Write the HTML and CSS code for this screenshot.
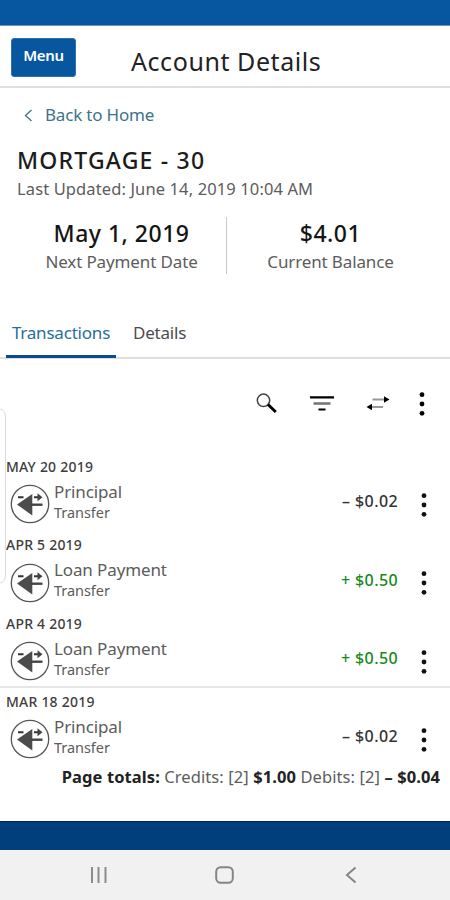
FILE: index.html
```html
<!DOCTYPE html>
<html lang="en">
<head>
<meta charset="utf-8">
<title>Account Details</title>
<link rel="stylesheet" href="styles.css">
</head>
<body>
<svg width="0" height="0" class="defs">
  <symbol id="transfer" viewBox="0 0 40 40">
    <circle cx="20" cy="20" r="18.700" fill="#fff" stroke="#555" stroke-width="1.300"/>
    <path d="M8 13.300h5.500M24 13.300h5" stroke="#333" stroke-width="2"/>
    <path d="M27.500 9.300l5 4-5 4z" fill="#444"/>
    <path d="M7 20.500L22.300 10v21.500z" fill="#4c4c4c"/>
    <path d="M20 20.700h12.500" stroke="#444" stroke-width="2.400"/>
  </symbol>
  <symbol id="dots" viewBox="0 0 6 24">
    <circle cx="3" cy="2.700" r="2.400"/><circle cx="3" cy="12" r="2.400"/><circle cx="3" cy="21.300" r="2.400"/>
  </symbol>
</svg>
<div class="status"></div>
<header class="header">
  <button class="menu">Menu</button>
  <h1 class="title">Account Details</h1>
</header>
<main class="main">
  <a class="back"><svg width="9" height="13" viewBox="0 0 9 13"><path d="M7.500 1L1.500 6.500l6 5.500" fill="none" stroke="#40728c" stroke-width="1.300"/></svg><span>Back to Home</span></a>
  <h2 class="account">MORTGAGE - 30</h2>
  <p class="updated">Last Updated: June 14, 2019 10:04 AM</p>
  <section class="summary">
    <div class="fact"><strong>May 1, 2019</strong><span>Next Payment Date</span></div>
    <div class="fact balance"><strong>$4.01</strong><span>Current Balance</span></div>
  </section>
  <nav class="tabs"><a class="tab active">Transactions</a><a class="tab">Details</a></nav>
  <div class="tools">
    <svg width="22" height="22" viewBox="0 0 22 22"><circle cx="7.500" cy="7.300" r="6.200" fill="none" stroke="#444" stroke-width="1.500"/><path d="M12 11.500l7.800 7.500" stroke="#000" stroke-width="3"/></svg>
    <svg width="26" height="22" viewBox="0 0 26 22"><path d="M1 4.300h24M9.500 16.500h7" stroke="#000" stroke-width="2.200"/><path d="M4.500 10.500h17" stroke="#777" stroke-width="2.600"/></svg>
    <svg width="24" height="22" viewBox="0 0 24 22"><path d="M6.500 6.500H19M5 14h12" stroke="#999" stroke-width="1.800"/><path d="M18 3.300l5.500 3.200-5.500 3.200zM6 10.800l-5.500 3.200 5.500 3.200z"/></svg>
    <svg width="6" height="24"><use href="#dots"/></svg>
  </div>
  <section class="group">
    <h3 class="day">MAY 20 2019</h3>
    <div class="row"><svg class="icon"><use href="#transfer"/></svg><div class="desc"><span class="name">Principal</span><span class="kind">Transfer</span></div><span class="amount">– $0.02</span><svg class="more"><use href="#dots"/></svg></div>
  </section>
  <section class="group">
    <h3 class="day">APR 5 2019</h3>
    <div class="row"><svg class="icon"><use href="#transfer"/></svg><div class="desc"><span class="name">Loan Payment</span><span class="kind">Transfer</span></div><span class="amount credit">+ $0.50</span><svg class="more"><use href="#dots"/></svg></div>
  </section>
  <section class="group">
    <h3 class="day">APR 4 2019</h3>
    <div class="row"><svg class="icon"><use href="#transfer"/></svg><div class="desc"><span class="name">Loan Payment</span><span class="kind">Transfer</span></div><span class="amount credit">+ $0.50</span><svg class="more"><use href="#dots"/></svg></div>
  </section>
  <section class="group ruled">
    <h3 class="day">MAR 18 2019</h3>
    <div class="row"><svg class="icon"><use href="#transfer"/></svg><div class="desc"><span class="name">Principal</span><span class="kind">Transfer</span></div><span class="amount">– $0.02</span><svg class="more"><use href="#dots"/></svg></div>
  </section>
  <p class="totals"><b>Page totals:</b> Credits: [2] <b>$1.00</b> Debits: [2] <b>– $0.04</b></p>
  <div class="edge"></div>
</main>
<div class="footer"></div>
<nav class="system">
  <svg width="18" height="18" viewBox="0 0 18 18"><path d="M2 1v16M8.500 1v16M15.500 1v16" stroke="#8c8c8c" stroke-width="2"/></svg>
  <svg width="19" height="18" viewBox="0 0 19 18"><rect x="1.200" y="1.200" width="16.600" height="15.600" rx="4.500" fill="none" stroke="#858585" stroke-width="2"/></svg>
  <svg width="12" height="18" viewBox="0 0 12 18"><path d="M10.500 1.500L2 9l8.500 7.500" fill="none" stroke="#858585" stroke-width="2"/></svg>
</nav>
</body>
</html>
```
FILE: styles.css
```css
* { box-sizing: border-box; }
body { margin: 0; width: 450px; height: 900px; overflow: hidden; background: #fff; font-family: "Noto Sans", sans-serif; color: #5c5c5c; }
h1, h2, h3, p { margin: 0; font-weight: 400; white-space: nowrap; }
svg { display: block; flex: none; }
.defs { display: none; }
.status { height: 26px; background: #0757a0; border-bottom: 1px solid #6997c2; }
.header { height: 62px; display: flex; align-items: flex-start; border-bottom: 2px solid #dedede; padding: 12px 0 0 11px; }
.menu { width: 65px; height: 39px; border: 1px solid #2f70ad; border-radius: 3px; background: #0757a0; color: #fff; font: 600 15px/20px "Noto Sans", sans-serif; letter-spacing: -.3px; padding: 0 0 5px; }
.title { margin-left: 55px; font-size: 25px; line-height: 34px; margin-top: 6px; color: #222; letter-spacing: .57px; }
.main { height: 733px; position: relative; padding-top: .1px; }
.back { display: flex; align-items: center; height: 24px; margin-top: 15px; padding-left: 24px; gap: 12px; color: #40728c; font-size: 17px; line-height: 24px; letter-spacing: -.2px; }
.account { margin: 18px 0 0 17px; font-size: 23px; line-height: 30px; color: #1c1c1c; font-weight: 500; letter-spacing: 1.2px; }
.updated { margin: 4px 0 0 17px; font-size: 16.5px; line-height: 20px; letter-spacing: .12px; }
.summary { display: grid; grid-template-columns: 227px 223px; height: 56px; margin-top: 18px; }
.fact { display: flex; flex-direction: column; align-items: center; padding-left: 17px; border-right: 1px solid #c9c9c9; white-space: nowrap; font-size: 17px; line-height: 24px; letter-spacing: -.13px; }
.balance { border: 0; padding: 0 16px 0 0; }
.fact strong { font-size: 23px; line-height: 33px; color: #151515; font-weight: 500; letter-spacing: .5px; }
.tabs { display: flex; height: 47px; margin: 39px 0 0; padding-left: 6px; border-bottom: 2px solid #dfdfdf; gap: 17px; }
.tab { height: 46px; font-size: 17px; line-height: 42px; color: #4b4b4b; letter-spacing: -.2px; }
.active { width: 110px; text-align: center; color: #286f98; border-bottom: 3px solid #084b91; }
.tools { display: flex; align-items: center; height: 24px; margin-top: 33px; padding-left: 256px; }
.tools svg:nth-child(2) { margin-left: 31px; }
.tools svg:nth-child(3) { margin-left: 31px; }
.tools svg:nth-child(4) { margin-left: 29px; }
.group { height: 78.400px; padding: 6px 0 0 6px; }
.tools + .group { margin-top: 34.700px; }
.day { font-size: 14px; line-height: 20px; color: #3e3e3e; font-weight: 500; letter-spacing: .22px; }
.row { display: flex; height: 49px; padding: 0 23px 0 4px; align-items: center; }
.icon { width: 40px; height: 40px; margin-top: 6px; }
.desc { margin-left: 4px; display: flex; flex-direction: column; white-space: nowrap; }
.name { font-size: 17px; line-height: 21px; letter-spacing: -.12px; }
.kind { font-size: 14.500px; line-height: 20px; letter-spacing: -.05px; }
.amount { margin-left: auto; font-size: 16px; line-height: 22px; color: #333; font-weight: 500; white-space: nowrap; letter-spacing: .4px; }
.credit { color: #16891b; }
.more { width: 6px; height: 24px; margin: 7px 0 0 23px; fill: #111; }
.ruled { border-top: 2px solid #e6e6e6; padding-top: 4px; }
.totals { text-align: right; padding-right: 10px; font-size: 16.500px; line-height: 22px; margin-top: 1.300px; letter-spacing: .09px; }
.totals b { color: #222; }
.edge { position: absolute; left: -10px; top: 320px; width: 16px; height: 176px; border: 1px solid #dcdcdc; border-radius: 8px; }
.footer { height: 28.500px; background: #003e7c; border-top: 1px solid #002060; }
.system { height: 51px; background: #f1f1f1; display: flex; align-items: center; padding-left: 90px; }
.system svg:nth-child(2) { margin-left: 107px; }
.system svg:nth-child(3) { margin-left: 111px; }
```
